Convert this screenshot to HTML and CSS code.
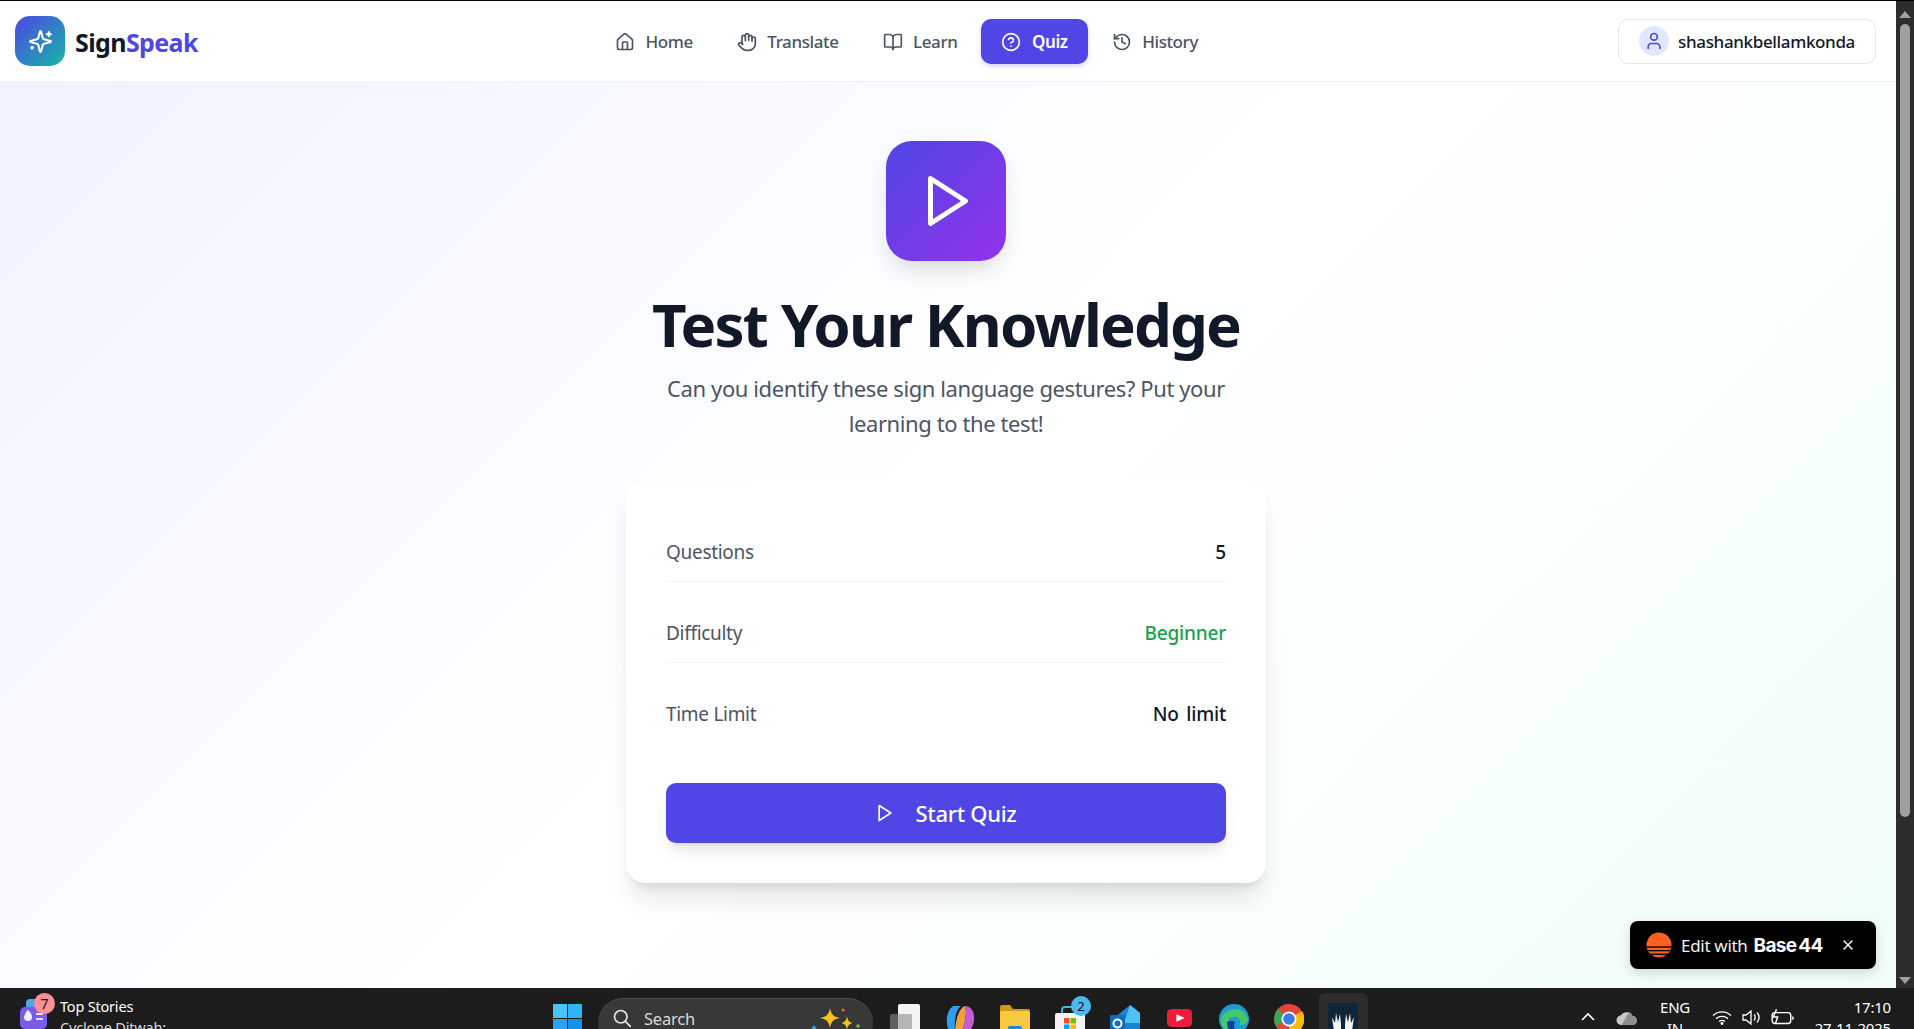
FILE: index.html
```html
<!DOCTYPE html>
<html lang="en">
<head>
<meta charset="utf-8">
<title>SignSpeak Quiz</title>
<link rel="stylesheet" href="styles.css">
</head>
<body>
<div class="window">
  <div class="page">
    <header class="topbar">
      <div class="brand">
        <div class="brand-mark">
          <svg class="ico ico-25" viewBox="0 0 24 24"><path d="M9.937 15.5A2 2 0 0 0 8.5 14.063l-6.135-1.582a.5.5 0 0 1 0-.962L8.5 9.936A2 2 0 0 0 9.937 8.5l1.582-6.135a.5.5 0 0 1 .963 0L14.063 8.5A2 2 0 0 0 15.5 9.937l6.135 1.581a.5.5 0 0 1 0 .964L15.5 14.063a2 2 0 0 0-1.437 1.437l-1.582 6.135a.5.5 0 0 1-.963 0z"/><path d="M20 3v4"/><path d="M22 5h-4"/><path d="M4 17v2"/><path d="M5 18H3"/></svg>
        </div>
        <div class="brand-name">Sign<span class="brand-accent">Speak</span></div>
      </div>
      <nav class="nav">
        <a class="nav-item"><svg class="ico ico-20" viewBox="0 0 24 24"><path d="M15 21v-8a1 1 0 0 0-1-1h-4a1 1 0 0 0-1 1v8"/><path d="M3 10a2 2 0 0 1 .709-1.528l7-5.999a2 2 0 0 1 2.582 0l7 5.999A2 2 0 0 1 21 10v9a2 2 0 0 1-2 2H5a2 2 0 0 1-2-2z"/></svg>Home</a>
        <a class="nav-item"><svg class="ico ico-20" viewBox="0 0 24 24"><path d="M18 11V6a2 2 0 0 0-2-2a2 2 0 0 0-2 2"/><path d="M14 10V4a2 2 0 0 0-2-2a2 2 0 0 0-2 2v2"/><path d="M10 10.5V6a2 2 0 0 0-2-2a2 2 0 0 0-2 2v8"/><path d="M18 8a2 2 0 1 1 4 0v6a8 8 0 0 1-8 8h-2c-2.8 0-4.5-.86-5.99-2.34l-3.6-3.6a2 2 0 0 1 2.83-2.82L7 15"/></svg>Translate</a>
        <a class="nav-item"><svg class="ico ico-20" viewBox="0 0 24 24"><path d="M12 7v14"/><path d="M3 18a1 1 0 0 1-1-1V4a1 1 0 0 1 1-1h5a4 4 0 0 1 4 4 4 4 0 0 1 4-4h5a1 1 0 0 1 1 1v13a1 1 0 0 1-1 1h-6a3 3 0 0 0-3 3 3 3 0 0 0-3-3z"/></svg>Learn</a>
        <a class="nav-item nav-active"><svg class="ico ico-20" viewBox="0 0 24 24"><circle cx="12" cy="12" r="10"/><path d="M9.09 9a3 3 0 0 1 5.83 1c0 2-3 3-3 3"/><path d="M12 17h.01"/></svg>Quiz</a>
        <a class="nav-item"><svg class="ico ico-20" viewBox="0 0 24 24"><path d="M3 12a9 9 0 1 0 9-9 9.75 9.75 0 0 0-6.74 2.74L3 8"/><path d="M3 3v5h5"/><path d="M12 7v5l4 2"/></svg>History</a>
      </nav>
      <div class="user">
        <span class="avatar"><svg class="ico ico-20" viewBox="0 0 24 24"><path d="M19 21v-2a4 4 0 0 0-4-4H9a4 4 0 0 0-4 4v2"/><circle cx="12" cy="7" r="4"/></svg></span>
        <span class="user-name">shashankbellamkonda</span>
      </div>
    </header>
    <main class="main">
      <div class="hero-icon">
        <svg class="ico ico-60 hero-play" viewBox="0 0 24 24"><polygon points="5 3 19 12 5 21 5 3"/></svg>
      </div>
      <h1 class="title">Test Your Knowledge</h1>
      <p class="subtitle">Can you identify these sign language gestures? Put your learning to the test!</p>
      <section class="card">
        <div class="rows">
          <div class="row row-line"><span class="row-label">Questions</span><span class="row-value">5</span></div>
          <div class="row row-line"><span class="row-label">Difficulty</span><span class="row-value value-green">Beginner</span></div>
          <div class="row"><span class="row-label">Time Limit</span><span class="row-value">No limit</span></div>
        </div>
        <button class="start"><svg class="ico ico-20" viewBox="0 0 24 24"><polygon points="5 3 19 12 5 21 5 3"/></svg>Start Quiz</button>
      </section>
    </main>
    <div class="badge">
      <svg class="badge-logo" viewBox="0 0 26 26"><defs><clipPath id="sun"><circle cx="13" cy="13" r="12.5"/></clipPath></defs><g clip-path="url(#sun)"><rect width="26" height="26" fill="#ff5f1f"/><rect y="14.4" width="26" height="1.3" fill="#000"/><rect y="18" width="26" height="1.3" fill="#000"/><rect y="21.6" width="26" height="1.3" fill="#000"/></g></svg>
      <span class="badge-edit">Edit with</span>
      <span class="badge-brand">Base<span class="badge-num">44</span></span>
      <svg class="badge-close" viewBox="0 0 24 24"><path d="M18 6 6 18"/><path d="m6 6 12 12"/></svg>
    </div>
  </div>
  <div class="scrollbar">
    <span class="arrow arrow-up"></span>
    <span class="thumb"></span>
    <span class="arrow arrow-down"></span>
  </div>
</div>
<footer class="taskbar">
  <div class="tb-news">
    <span class="news-icon">
      <svg class="news-art" viewBox="0 0 28 36"><rect x="6" y="0" width="20" height="20" rx="4" fill="#4aa8e8"/><rect x="0" y="8" width="27" height="22" rx="5" fill="#7a5ce8"/><path d="M8 11c3 3 4 5 4 7a4 4 0 0 1-8 0c0-2 2-3 2-5z" fill="#f3f0ff"/><rect x="16" y="14" width="7" height="2" fill="#e5defc"/><rect x="16" y="19" width="7" height="2" fill="#e5defc"/></svg>
      <span class="news-count">7</span>
    </span>
    <div class="news-text"><div class="news-title">Top Stories</div><div class="news-sub">Cyclone Ditwah:</div></div>
  </div>
  <div class="tb-center">
    <svg class="tb-win" viewBox="0 0 29 29"><rect width="14" height="14" fill="#45c6f7"/><rect x="15" width="14" height="14" fill="#2fb5f5"/><rect y="15" width="14" height="14" fill="#2aa4f0"/><rect x="15" y="15" width="14" height="14" fill="#1492ea"/></svg>
    <div class="tb-search">
      <svg class="search-glass" viewBox="0 0 24 24"><circle cx="10.5" cy="10.5" r="7.5"/><path d="m16 16 6 6"/></svg>
      <span class="search-word">Search</span>
      <svg class="search-gem" viewBox="0 0 50 30"><path d="M20 3c1.500 7 3 8.500 10 10-7 1.500-8.500 3-10 10-1.500-7-3-8.500-10-10 7-1.500 8.500-3 10-10z" fill="#f8c21c"/><path d="M37 11c.8 4.500 1.500 5.500 5.500 7-4 1.500-4.700 2.500-5.500 7-.8-4.500-1.500-5.500-5.500-7 4-1.500 4.700-2.500 5.500-7z" fill="#f8c21c"/><path d="M4 19c.5 2.500 1 3 3 4-2 1-2.500 1.500-3 4-.5-2.500-1-3-3-4 2-1 2.500-1.500 3-4z" fill="#2b9cf0"/><circle cx="33" cy="5" r="1.600" fill="#f0682c"/><circle cx="48" cy="21" r="1.800" fill="#7ac142"/></svg>
    </div>
    <svg class="tb-app" viewBox="0 0 30 36"><rect x="0" y="10" width="22" height="26" rx="2" fill="#5e5e5e"/><rect x="8" y="0" width="22" height="27" rx="2" fill="#f4f4f4"/><rect x="8" y="10" width="14" height="17" fill="#b5b5b5"/></svg>
    <svg class="tb-app" viewBox="0 0 30 36"><path d="M8 2h8c-5 4-7 12-6 28H6C0 22 0 8 8 2z" fill="#2f9df0"/><path d="M10 30C10 16 14 4 20 2c2 4 1 20-6 30z" fill="#f0a23a"/><path d="M20 2c6 0 10 6 9 14-1 10-8 18-16 16 7-8 9-20 7-30z" fill="#c65bd8"/></svg>
    <svg class="tb-app" viewBox="0 0 30 36"><path d="M0 3a2 2 0 0 1 2-2h8l3 4h15a2 2 0 0 1 2 2v4H0z" fill="#d29a12"/><rect y="7" width="30" height="29" rx="2" fill="#f8c940"/><rect x="8" y="22" width="14" height="14" rx="2" fill="#1a8ad4"/><rect x="11" y="27" width="8" height="2" fill="#d8efff"/></svg>
    <span class="tb-store">
      <svg class="tb-app" viewBox="0 0 30 36"><path d="M7 11V6a3 3 0 0 1 3-3h10" fill="none" stroke="#3fb2f3" stroke-width="2"/><rect y="9" width="30" height="27" rx="2" fill="#f3f3f3"/><rect x="9" y="14" width="5.500" height="5.500" fill="#f25022"/><rect x="15.500" y="14" width="5.500" height="5.500" fill="#7fba00"/><rect x="9" y="20.500" width="5.500" height="5.500" fill="#00a4ef"/><rect x="15.500" y="20.500" width="5.500" height="5.500" fill="#ffb900"/></svg>
      <span class="store-count">2</span>
    </span>
    <svg class="tb-app" viewBox="0 0 30 36"><path d="M4 14 20 1l10 8v27H8V18z" fill="#1a83d2"/><path d="M20 1l10 8v10H14z" fill="#4fc3f7"/><rect x="0" y="11" width="15" height="17" rx="1.500" fill="#0f6cbd"/><circle cx="7.500" cy="19.500" r="4" fill="none" stroke="#fff" stroke-width="2"/></svg>
    <svg class="tb-yt" viewBox="0 0 24 24" preserveAspectRatio="none"><rect width="24" height="24" rx="5" fill="#ee1c3a"/><path d="M9 7l8 5-8 5z" fill="#fff"/></svg>
    <svg class="tb-app" viewBox="0 0 30 36"><circle cx="15" cy="15" r="15" fill="#1b9ad6"/><path d="M2 15C4 4 26 0 29 15c0 5-5 6-9 6 3-3 1-8-5-8C8 13 6 22 13 28 6 27 1 22 2 15z" fill="#45c76a"/><path d="M8 19c0 8 8 12 14 9-7 0-8-6-6-10-3-2-8-1-8 1z" fill="#0d3f94"/></svg>
    <svg class="tb-app" viewBox="0 0 30 36"><circle cx="15" cy="15" r="15" fill="#e2453a"/><path d="M15 15 2 22A15 15 0 0 1 4 5z" fill="#34a853"/><path d="M15 15 28 7a15 15 0 0 1-13 23z" fill="#fbbc05"/><path d="M4 5a15 15 0 0 1 24 3H15z" fill="#e2453a"/><circle cx="15" cy="15" r="7.500" fill="#fff"/><circle cx="15" cy="15" r="5.800" fill="#3b7de8"/></svg>
    <span class="tb-active">
      <svg class="tb-app-plain" viewBox="0 0 30 36"><rect width="30" height="36" fill="#10243a"/><path d="M6 28 4 14l3 6 1-10 2 9 2-8 1 10v7zM24 28l2-14-3 6-1-10-2 9-2-8-1 10v7z" fill="#f2f2f2"/></svg>
    </span>
  </div>
  <div class="tb-tray">
    <svg class="tray-chev" viewBox="0 0 16 10"><path d="M2 8l6-6 6 6"/></svg>
    <svg class="tray-cloud" viewBox="0 0 20 13"><path d="M5 13a4.500 4.500 0 0 1-.5-9A6 6 0 0 1 15 4.500a4.300 4.300 0 0 1 .5 8.500z" fill="#c9c9c9"/><path d="M5 13 12 1a6 6 0 0 1 3 3.500a4.300 4.300 0 0 1 .5 8.500z" fill="#8f8f8f"/></svg>
    <div class="tray-lang"><div>ENG</div><div>IN</div></div>
    <svg class="tray-ico tray-wifi" viewBox="0 0 20 15"><path d="M1 5.500a13 13 0 0 1 18 0M4 8.700a9 9 0 0 1 12 0M7 11.500a5 5 0 0 1 6 0"/><circle cx="10" cy="13.500" r=".8"/></svg>
    <svg class="tray-ico tray-sound" viewBox="0 0 20 15"><path d="M1 5h3l5-4v13l-5-4H1zM12 4.500c1.500 1.500 1.500 4.500 0 6M15 2.500c2.500 3 2.500 7 0 10"/></svg>
    <svg class="tray-ico tray-batt" viewBox="0 0 22 15"><rect x="2" y="3" width="17" height="10" rx="2.500"/><path d="M21 6.500v3M6 0 3 7h4l-2 6"/></svg>
    <div class="tray-clock"><div>17:10</div><div>27-11-2025</div></div>
  </div>
</footer>
</body>
</html>
```
FILE: styles.css
```css
* { box-sizing: border-box; }
html, body { height: 100%; margin: 0; }
body {
  display: flex;
  flex-direction: column;
  height: 100vh;
  overflow: hidden;
  border-top: 1px solid #000;
  background: #1c1c1c;
  font-family: "Noto Sans", "Open Sans", sans-serif;
  color: #0f172a;
}
.ico { fill: none; stroke: currentColor; stroke-width: 2; stroke-linecap: round; stroke-linejoin: round; display: block; flex: none; }
.ico-20 { width: 20px; height: 20px; }
.ico-25 { width: 25px; height: 25px; }
.ico-60 { width: 60px; height: 60px; }

.window { flex: 1; display: flex; min-height: 0; }
.page {
  flex: 1;
  position: relative;
  min-width: 0;
  overflow: hidden;
  background: linear-gradient(135deg, #eef2ff 0%, #ffffff 50%, #f0fdfa 100%);
}

.topbar {
  height: 81px;
  display: flex;
  align-items: center;
  justify-content: space-between;
  padding: 0 20px 0 15px;
  background: rgba(255,255,255,.95);
  border-bottom: 1px solid #f1f3f6;
}
.brand { display: flex; align-items: center; gap: 10px; }
.brand-mark {
  width: 50px; height: 50px;
  border-radius: 15px;
  display: flex; align-items: center; justify-content: center;
  color: #fff;
  background: linear-gradient(135deg, #4f46e5, #14b8a6);
}
.brand-name { padding-top: 2px; font-size: 25px; font-weight: 700; letter-spacing: -.6px; color: #111827; }
.brand-accent { color: #4f46e5; }

.nav { display: flex; gap: 4px; margin-right: 3px; }
.nav-item {
  display: flex; align-items: center; gap: 10.500px;
  height: 45px;
  padding: 1px 20px 0;
  border-radius: 10px;
  font-size: 17px;
  font-weight: 500;
  letter-spacing: -.4px;
  color: #4b5563;
}
.nav-active {
  background: #4f46e5;
  color: #fff;
  font-weight: 600;
  box-shadow: 0 2px 5px rgba(79,70,229,.25);
}

.user {
  display: flex; align-items: center; gap: 9px;
  height: 45px;
  padding: 0 20px;
  background: #fff;
  border: 1px solid #e5e7eb;
  border-radius: 10px;
}
.avatar {
  width: 30px; height: 30px;
  border-radius: 50%;
  background: #e0e7ff;
  color: #4f46e5;
  display: flex; align-items: center; justify-content: center;
}
.user-name { padding-top: 1px; font-size: 17px; font-weight: 500; letter-spacing: -.35px; color: #111827; }

.main {
  display: flex; flex-direction: column; align-items: center;
  padding: 59px 4px 0 0;
}
.hero-icon {
  width: 120px; height: 120px;
  border-radius: 26px;
  display: flex; align-items: center; justify-content: center;
  color: #fff;
  background: linear-gradient(135deg, #4f46e5, #9333ea);
  box-shadow: 0 12px 24px -6px rgba(0,0,0,.16);
}
.hero-play { margin-left: 4px; }
.title {
  margin: 26px 0 0;
  font-size: 60px;
  line-height: 75px;
  font-weight: 700;
  letter-spacing: -1.85px;
  color: #111827;
}
.subtitle {
  margin: 9px 0 0;
  width: 640px;
  text-align: center;
  font-size: 22px;
  line-height: 35px;
  letter-spacing: -.4px;
  color: #4b5563;
}
.card {
  width: 640px;
  height: 402px;
  margin-top: 40px;
  padding: 40px;
  background: #fff;
  border-radius: 20px;
  box-shadow: 0 20px 25px -5px rgba(0,0,0,.1), 0 8px 10px -6px rgba(0,0,0,.1);
}
.rows { display: flex; flex-direction: column; gap: 20px; }
.row { height: 60px; padding-top: 1px; display: flex; align-items: center; justify-content: space-between; }
.row-line { height: 61px; border-bottom: 1px solid #f3f4f6; }
.row-label { font-size: 19px; letter-spacing: -.3px; color: #4b5563; }
.row-value { font-size: 19px; font-weight: 500; letter-spacing: -.2px; word-spacing: 3px; color: #0f172a; }
.value-green { color: #16a34a; }
.start {
  width: 100%; height: 60px;
  margin-top: 40px;
  padding-top: 1px;
  display: flex; align-items: center; justify-content: center; gap: 20px;
  border: 0;
  border-radius: 10px;
  background: #4f46e5;
  color: #fff;
  font-family: inherit;
  font-size: 22px;
  font-weight: 500;
  letter-spacing: -.3px;
  box-shadow: 0 10px 15px -3px rgba(0,0,0,.1), 0 4px 6px -4px rgba(0,0,0,.1);
}

.badge {
  position: absolute;
  right: 20px;
  bottom: 19px;
  width: 246px; height: 48px;
  padding: 0 20px 0 16px;
  display: flex; align-items: center;
  border-radius: 8px;
  background: #000;
  color: #fff;
  box-shadow: 0 4px 12px rgba(0,0,0,.15);
}
.badge-logo { width: 26px; height: 26px; flex: none; }
.badge-edit { margin-left: 9px; font-size: 17px; letter-spacing: -.3px; color: #f3f3f3; }
.badge-brand { margin-left: 6px; font-family: "Inter", sans-serif; font-size: 19px; font-weight: 700; letter-spacing: -.7px; }
.badge-num { margin-left: 2px; }
.badge-close { width: 16px; height: 16px; margin-left: auto; fill: none; stroke: #fff; stroke-width: 2; stroke-linecap: round; }

.scrollbar {
  width: 18px;
  background: #2c2c2c;
  display: flex; flex-direction: column; align-items: center;
}
.arrow { width: 0; height: 0; border-left: 6px solid transparent; border-right: 6px solid transparent; flex: none; }
.arrow-up { margin-top: 10px; border-bottom: 7px solid #a0a0a0; }
.arrow-down { margin-top: auto; margin-bottom: 4px; border-top: 7px solid #a0a0a0; }
.thumb { width: 10px; height: 793px; margin-top: 6px; border-radius: 5px; background: #9f9f9f; }

.taskbar {
  height: 41px;
  flex: none;
  display: flex;
  overflow: hidden;
  background: #1c1c1c;
  color: #fff;
  font-family: "Noto Sans", sans-serif;
}
.tb-news { width: 553px; flex: none; display: flex; padding: 8px 0 0 20px; gap: 12px; }
.news-icon { position: relative; width: 28px; height: 36px; margin-top: 3px; flex: none; }
.news-art { width: 28px; height: 36px; display: block; }
.news-count {
  position: absolute; left: 14px; top: -6px;
  width: 21px; height: 21px;
  border-radius: 50%;
  background: #ff8f97;
  color: #111;
  font-size: 14px; line-height: 21px; text-align: center;
}
.news-text { font-size: 14.500px; line-height: 21px; letter-spacing: -.2px; }
.news-sub { color: #d6d6d6; }

.tb-center { display: flex; align-items: flex-start; flex: none; }
.tb-win { width: 29px; height: 29px; margin: 16px 16px 0 0; flex: none; }
.tb-search {
  width: 275px; height: 50px;
  margin: 10px 17px 0 0;
  flex: none;
  display: flex; align-items: flex-start;
  padding: 10px 13px 0 14px;
  border-radius: 25px;
  background: #383838;
  box-shadow: inset 0 1px 0 #4a4a4a;
}
.search-glass { width: 20px; height: 20px; flex: none; fill: none; stroke: #e8e8e8; stroke-width: 2; stroke-linecap: round; }
.search-word { margin-left: 12px; font-size: 16.500px; line-height: 21px; letter-spacing: -.2px; color: #d8d8d8; }
.search-gem { width: 50px; height: 30px; margin: -3px 0 0 auto; flex: none; }
.tb-app { width: 30px; height: 36px; margin: 16px 25px 0 0; flex: none; display: block; }
.tb-store { position: relative; display: block; flex: none; }
.store-count {
  position: absolute; left: 16px; top: 8px;
  width: 20px; height: 20px;
  border-radius: 50%;
  background: #4db8f0;
  color: #111;
  font-size: 13px; line-height: 20px; text-align: center;
}
.tb-yt { width: 25px; height: 18px; margin: 21px 27px 0 2px; flex: none; }
.tb-active {
  width: 49px; height: 40px;
  margin: 5px 0 0 -10px;
  padding: 10px 0 0 9px;
  flex: none;
  background: #2d2d2d;
  border-radius: 6px 6px 0 0;
}
.tb-app-plain { width: 30px; height: 36px; display: block; }

.tb-tray { flex: 1; display: flex; align-items: flex-start; min-width: 0; padding-right: 23px; }
.tray-chev { width: 16px; height: 10px; margin: 24px 0 0 212px; flex: none; fill: none; stroke: #fff; stroke-width: 1.6; }
.tray-cloud { width: 22px; height: 14px; margin: 23px 0 0 20px; flex: none; }
.tray-lang { margin: 9px 0 0 22px; width: 30px; flex: none; text-align: center; font-size: 15px; line-height: 21px; letter-spacing: -.3px; }
.tray-ico { width: 20px; height: 15px; margin-top: 22px; flex: none; fill: none; stroke: #fff; stroke-width: 1.300; }
.tray-wifi { margin-left: 22px; }
.tray-sound { margin-left: 10px; }
.tray-batt { width: 24px; height: 17px; margin-top: 21px; margin-left: 8px; }
.tray-clock { margin: 9px 0 0 auto; text-align: right; font-size: 15px; line-height: 21px; letter-spacing: -.2px; white-space: nowrap; }
```
